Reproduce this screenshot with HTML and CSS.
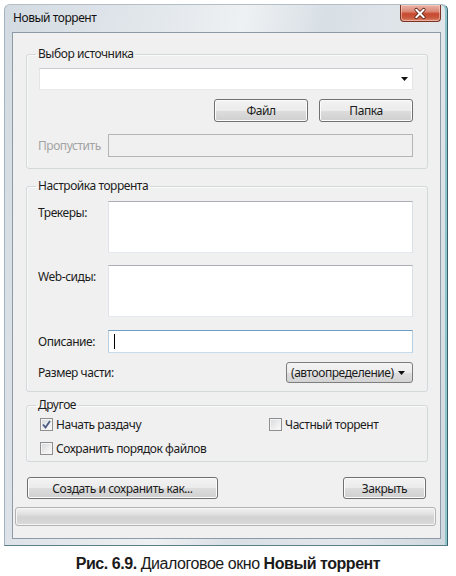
FILE: index.html
```html
<!DOCTYPE html>
<html lang="ru">
<head>
<meta charset="utf-8">
<title>Новый торрент</title>
<link rel="stylesheet" href="styles.css">
</head>
<body>
<div class="window">
  <div class="titlebar">
    <span class="title">Новый торрент</span>
    <div class="close">
      <svg width="43" height="17" viewBox="0 0 43 17">
        <path d="M17.5 4.5 L25.5 12.5 M25.5 4.5 L17.5 12.5" stroke="#5a1e12" stroke-width="4" stroke-linecap="round" fill="none"/>
        <path d="M17.5 4.5 L25.5 12.5 M25.5 4.5 L17.5 12.5" stroke="#ffffff" stroke-width="2.2" stroke-linecap="round" fill="none"/>
      </svg>
    </div>
  </div>
  <div class="client">
    <fieldset class="group g-source">
      <legend>Выбор источника</legend>
      <div class="combo edit">
        <span class="combo-text"></span>
        <svg class="arrow" width="7" height="4" viewBox="0 0 7 4"><path d="M0 0 H7 L3.5 4 Z" fill="#111"/></svg>
      </div>
      <div class="btnrow">
        <button class="btn btn-small">Файл</button>
        <button class="btn btn-small">Папка</button>
      </div>
      <div class="row row-mid skip">
        <label class="lbl disabled">Пропустить</label>
        <div class="textbox is-disabled"></div>
      </div>
    </fieldset>

    <fieldset class="group g-torrent">
      <legend>Настройка торрента</legend>
      <div class="row row-top">
        <label class="lbl">Трекеры:</label>
        <div class="textbox area"></div>
      </div>
      <div class="row row-top gap12">
        <label class="lbl">Web-сиды:</label>
        <div class="textbox area"></div>
      </div>
      <div class="row row-mid gap13">
        <label class="lbl">Описание:</label>
        <div class="textbox focus"><span class="caret"></span></div>
      </div>
      <div class="row row-mid gap9 between">
        <label class="lbl">Размер части:</label>
        <div class="combo drop">
          <span class="combo-text">(автоопределение)</span>
          <svg class="arrow" width="7" height="4" viewBox="0 0 7 4"><path d="M0 0 H7 L3.5 4 Z" fill="#111"/></svg>
        </div>
      </div>
    </fieldset>

    <fieldset class="group g-other">
      <legend>Другое</legend>
      <div class="checks">
        <label class="check"><span class="box checked"><svg width="9" height="9" viewBox="0 0 9 9"><path d="M1 4.5 L3.5 7.5 L8 1" stroke="#4b5c86" stroke-width="1.8" fill="none"/></svg></span>Начать раздачу</label>
        <label class="check"><span class="box"></span>Частный торрент</label>
        <label class="check"><span class="box"></span>Сохранить порядок файлов</label>
      </div>
    </fieldset>

    <div class="actions">
      <button class="btn btn-create">Создать и сохранить как...</button>
      <button class="btn btn-close">Закрыть</button>
    </div>

    <div class="progress"></div>
  </div>
</div>
<p class="caption"><b>Рис. 6.9.</b> Диалоговое окно <b>Новый торрент</b></p>
</body>
</html>
```

FILE: styles.css
```css
* { box-sizing: border-box; }

html, body {
  margin: 0;
  padding: 0;
  background: #ffffff;
}

body {
  width: 456px;
  height: 576px;
  overflow: hidden;
  font-family: "Noto Sans", "Open Sans", sans-serif;
  font-size: 12px;
  letter-spacing: -0.45px;
  color: #1c1c1c;
}

.window {
  margin: 4px 0 0 4px;
  width: 444px;
  height: 542px;
  border: 1px solid;
  border-color: #b4bec6 #37606a #5a7e86 #a3b2bc;
  border-radius: 6px 6px 0 0;
  background: linear-gradient(100deg, #d3dbe2 0%, #e3e8ec 30%, #eef1f3 45%, #d8dfe5 60%, #e2e7eb 80%, #cfd8df 100%);
  padding: 0 6px 6px 7px;
  display: flex;
  flex-direction: column;
  box-shadow: inset -2px 0 0 #8fc6cb;
}

.titlebar {
  height: 27px;
  flex: none;
  display: flex;
  justify-content: space-between;
  align-items: flex-start;
}

.title {
  padding: 6px 0 0 1px;
  font-size: 12px;
  line-height: 14px;
  color: #111;
}

.close {
  width: 41px;
  height: 17px;
  margin-right: 0;
  border: 1px solid #7a3426;
  border-top: none;
  border-radius: 0 0 4px 4px;
  background: linear-gradient(#eab3a6 0%, #dc8a77 40%, #c8492f 55%, #c85a40 80%, #de8b6f 100%);
  box-shadow: inset 0 0 0 1px rgba(255, 220, 210, 0.5);
  display: flex;
  justify-content: center;
}

.close svg { display: block; margin-left: -1px; }

.client {
  flex: 1;
  border: 1px solid #8e9ba6;
  background: #f0f0f0;
  padding: 14px 4px 0 2px;
  display: flex;
  flex-direction: column;
}

.group {
  margin: 0 8px 0 11px;
  padding: 7px 14px 11px 11px;
  border: 1px solid #d3d8db;
  border-radius: 3px;
  min-width: 0;
  box-shadow: inset 1px 1px 0 #fafafa;
}

.group legend {
  padding: 0 2px;
  margin-left: -2px;
  line-height: 14px;
  font-size: 12px;
  color: #1c1c1c;
}

.g-torrent { margin-top: 10px; padding-top: 8px; padding-bottom: 8px; }
.g-other { margin-top: 6px; padding-top: 4px; padding-bottom: 5px; }

/* combo boxes */
.combo {
  display: flex;
  align-items: center;
  justify-content: space-between;
}

.combo .arrow { display: block; flex: none; }

.combo.edit {
  height: 22px;
  margin-left: 1px;
  background: #ffffff;
  border: 1px solid;
  border-color: #c9cdd2 #e2e5e8 #e6e9ec #e2e5e8;
  padding: 0 4px 0 4px;
}

.combo.drop {
  width: 127px;
  height: 21px;
  border: 1px solid #7d7d7d;
  border-radius: 3px;
  background: linear-gradient(#f4f4f4 0%, #ececec 50%, #dedede 51%, #d3d3d3 100%);
  padding: 0 7px 0 4px;
  color: #1c1c1c;
}

/* buttons */
.btn {
  font-family: inherit;
  font-size: 12px;
  letter-spacing: -0.45px;
  color: #1c1c1c;
  border: 1px solid #707070;
  border-radius: 3px;
  background: linear-gradient(#f3f3f3 0%, #ebebeb 50%, #dddddd 51%, #cfcfcf 100%);
  box-shadow: inset 0 0 0 1px #fcfcfc;
  padding: 0;
  margin: 0;
}

.btnrow {
  margin-top: 9px;
  display: flex;
  justify-content: flex-end;
  gap: 11px;
}

.btn-small { width: 94px; height: 23px; }

/* rows */
.row { display: flex; }
.row-top { align-items: flex-start; }
.row-mid { align-items: center; }
.between { justify-content: space-between; }
.skip { margin-top: 12px; }
.gap12 { margin-top: 12px; }
.gap13 { margin-top: 13px; }
.gap9 { margin-top: 9px; }

.lbl {
  width: 70px;
  flex: none;
  line-height: 16px;
  white-space: nowrap;
}

.row-top .lbl { padding-top: 4px; }
.between .lbl { width: auto; }

.lbl.disabled { color: #a3a3a3; }

.textbox {
  flex: 1;
  height: 23px;
  background: #ffffff;
  border: 1px solid;
  border-color: #abadb3 #dbdfe6 #e3e9ef #e2e3ea;
}

.textbox.area { height: 52px; }

.textbox.is-disabled {
  background: #f0f0f0;
  border-color: #b2b6b9;
}

.textbox.focus {
  border-color: #6f9ec4 #b6cfe3 #c6dbeb #b6cfe3;
  display: flex;
  align-items: center;
  padding-left: 5px;
}

.caret {
  width: 1px;
  height: 15px;
  background: #000;
}

/* checkboxes */
.checks {
  display: grid;
  grid-template-columns: 229px 1fr;
  row-gap: 8px;
}

.check {
  display: flex;
  align-items: center;
  height: 16px;
  padding-left: 2px;
  gap: 3px;
  white-space: nowrap;
}

.box {
  width: 13px;
  height: 13px;
  flex: none;
  border: 1px solid #8f8f8f;
  background: linear-gradient(135deg, #d6d8db 0%, #f2f2f2 70%, #fbfbfb 100%);
  box-shadow: inset 0 0 0 1px #f4f4f4;
  display: flex;
  align-items: center;
  justify-content: center;
}

.box svg { display: block; }

/* bottom actions */
.actions {
  margin: 15px 10px 0 12px;
  display: flex;
  justify-content: space-between;
}

.btn-create { width: 191px; height: 22px; }
.btn-close { width: 83px; height: 22px; }

.progress {
  margin-top: 8px;
  height: 19px;
  border: 1px solid #b3b3b3;
  border-radius: 3px;
  background: linear-gradient(#f2f2f2 0%, #e1e1e1 35%, #d2d2d2 55%, #dadada 100%);
  box-shadow: inset 0 0 0 1px #f5f5f5;
}

.caption {
  margin: 8px 0 0;
  text-align: center;
  font-family: "Liberation Sans", Arial, sans-serif;
  font-size: 16px;
  line-height: 19px;
  color: #1a1a1a;
}
```
